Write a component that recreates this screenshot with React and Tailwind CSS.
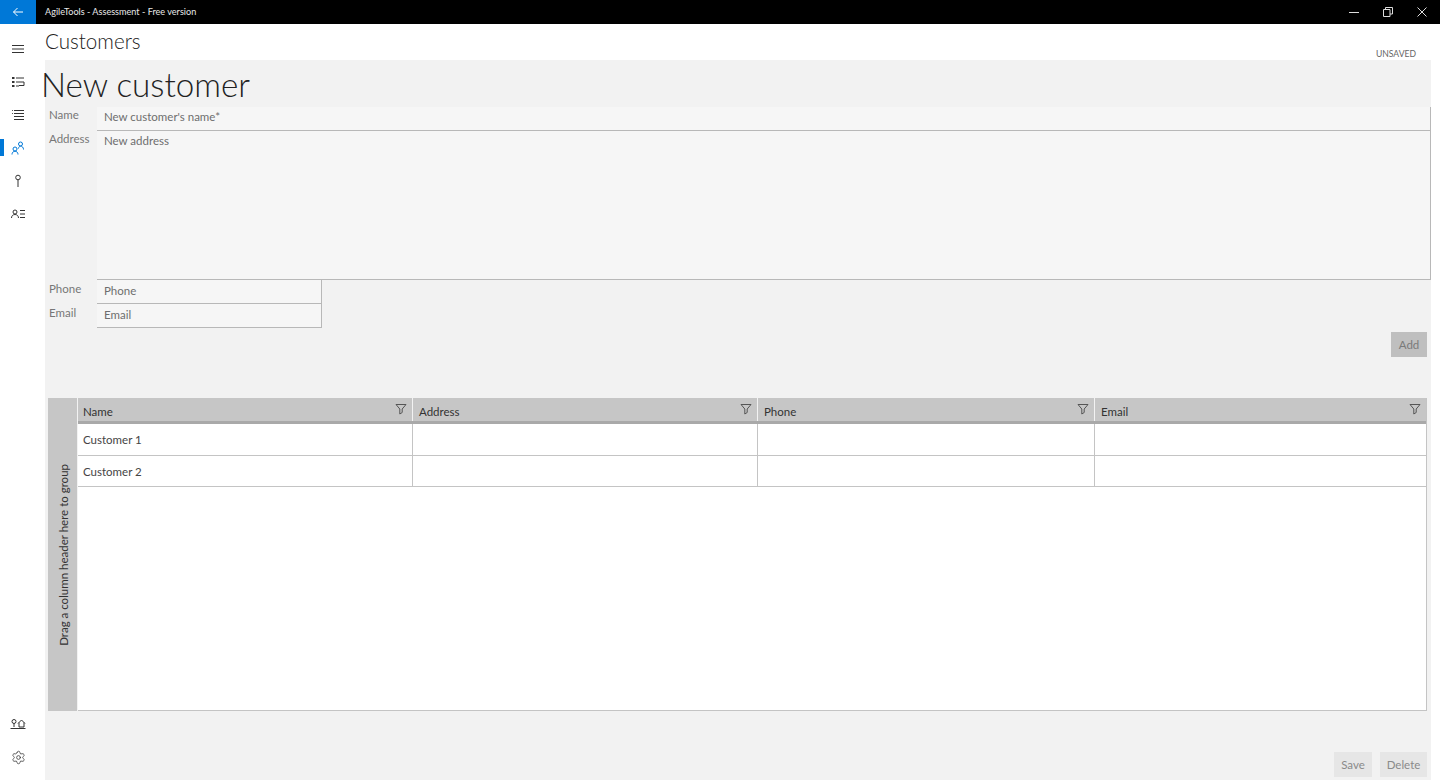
import React from "react";
import { Settings } from "lucide-react";

function Ic({ children, active }) {
  return (
    <svg width="16" height="16" viewBox="0 0 16 16" fill="none" stroke={active ? "#0078d7" : "#333"} strokeWidth="1">
      {children}
    </svg>
  );
}

function NavItem({ children, active }) {
  return (
    <div className="relative flex h-[33px] w-full items-center justify-center">
      {active && <div className="absolute left-0 top-[8px] h-[17px] w-[4px] bg-[#0078d7]" />}
      {children}
    </div>
  );
}

function Filter() {
  return (
    <svg width="12" height="12" viewBox="0 0 12 12" fill="none" stroke="#555" strokeWidth="1" className="absolute right-[5px] top-[5px]">
      <path d="M1 1.500h10L7.200 6v3.500L4.800 11V6z" />
    </svg>
  );
}

function Input({ text, className }) {
  return (
    <div className={`border-b border-r border-[#b8b8b8] bg-[#f6f6f6] pl-[7px] text-[11.500px] text-[#6e6e6e] ${className}`}>{text}</div>
  );
}

const cols = [
  ["Name", "w-[335px]"],
  ["Address", "w-[345px]"],
  ["Phone", "w-[337px]"],
  ["Email", "flex-1"],
];

function Row({ text }) {
  return (
    <div className="flex h-[31.500px] border-b border-[#c4c4c4] bg-white">
      {cols.map(([n, w], i) => (
        <div key={n} className={`${w} flex items-center pl-[5px] pt-[1px] text-[11.500px] text-[#444] ${i < 3 ? "border-r border-[#c4c4c4]" : ""}`}>
          {i === 0 ? text : ""}
        </div>
      ))}
    </div>
  );
}

export default function App() {
  return (
    <div className="flex h-[780px] w-[1440px] flex-col overflow-hidden bg-white font-['Lato','Open_Sans',sans-serif]">
      <header className="flex h-[24px] shrink-0 items-center bg-black text-white">
        <div className="flex h-full w-[36px] items-center justify-center bg-[#0078d7]">
          <svg width="12" height="12" viewBox="0 0 12 12" fill="none" stroke="#fff" strokeWidth="1">
            <path d="M11 6H1.500M5.500 2L1.500 6l4 4" />
          </svg>
        </div>
        <div className="ml-[9px] flex-1 text-[9.100px] text-[#e8e8e8]">AgileTools - Assessment - Free version</div>
        <svg width="10" height="10" viewBox="0 0 10 10" stroke="#ddd" fill="none" className="mr-[24px]"><path d="M0 5.500h10" /></svg>
        <svg width="10" height="10" viewBox="0 0 10 10" stroke="#ddd" fill="none" className="mr-[24px]"><path d="M.5 2.500h6.500v7H.5zM2.500 2.500V.5h7v6.500H7" /></svg>
        <svg width="10" height="10" viewBox="0 0 10 10" stroke="#ddd" fill="none" className="mr-[13px]"><path d="M.5.5l9 9M9.500.5l-9 9" /></svg>
      </header>

      <div className="flex min-h-0 flex-1">
        <nav className="flex w-[36px] shrink-0 flex-col pt-[8px]">
          <NavItem><Ic><path d="M2 4.500h12M2 8h12M2 11.500h12" /></Ic></NavItem>
          <NavItem>
            <Ic>
              <path d="M2 3h2.500v2H2zM2 7h2.500v2H2zM2 11h2.500v2H2z" fill="#333" stroke="none" />
              <path d="M6 4h8M6 8h8v3.500H9M6 12h3" />
            </Ic>
          </NavItem>
          <NavItem><Ic><path d="M4 3.500h10M4 6.500h10M4 9.500h10M4 12.500h10M2 3.500h.8M2 6.500h.8" /></Ic></NavItem>
          <NavItem active>
            <Ic active>
              <circle cx="5" cy="9" r="2" />
              <circle cx="10.500" cy="4" r="2" />
              <path d="M2 14.500c0-1.800 1.200-3.300 3-3.300s3 1.500 3 3.300M8.200 8.700c.5-1.500 1.300-2.600 2.300-2.600 1.700 0 3 1.400 3 3.400" />
            </Ic>
          </NavItem>
          <NavItem><Ic><circle cx="8" cy="4.500" r="2.300" /><path d="M8 6.800V14" /></Ic></NavItem>
          <NavItem>
            <Ic>
              <circle cx="5" cy="6" r="2" />
              <path d="M1.500 12c0-2 1.300-3.500 3.500-3.500s3.500 1.500 3.500 3.500M10 4.500h5M10 8h5M10 11.500h5" />
            </Ic>
          </NavItem>
          <div className="flex-1" />
          <div className="flex h-[33px] w-full items-start justify-center pt-[8px]">
            <Ic>
              <circle cx="4" cy="5.500" r="2" />
              <path d="M4 7.500v3.500M8 7.500l3.500-3.500 3.500 3.500M9 6.500V11h5V6.500M.5 12.500h15" />
            </Ic>
          </div>
          <NavItem><Settings size={15} strokeWidth={1.200} color="#333" /></NavItem>
          <div className="h-[6px]" />
        </nav>

        <main className="ml-[9px] flex w-[1386px] min-w-0 flex-col">
          <div className="relative h-[36px] shrink-0">
            <h1 className="pt-[3px] text-[20.600px] font-light leading-[28px] text-[#222]">Customers</h1>
            <span className="absolute right-[15px] top-[24px] text-[8.600px] leading-[12px] text-[#666]">UNSAVED</span>
          </div>

          <section className="flex min-h-0 flex-1 flex-col bg-[#f2f2f2]">
            <h2 className="-ml-[4px] h-[47px] shrink-0 text-[33.200px] font-light leading-[48px] text-[#222]">New customer</h2>

            <div className="flex h-[24px]">
              <label className="w-[52px] pl-[4px] text-[11.500px] leading-[16px] text-[#777]">Name</label>
              <Input text="New customer's name*" className="flex-1 leading-[20px]" />
            </div>
            <div className="flex h-[149px]">
              <label className="w-[52px] pl-[4px] text-[11.500px] leading-[16px] text-[#777]">Address</label>
              <Input text="New address" className="flex-1 pt-[2px] leading-[16px]" />
            </div>
            <div className="flex h-[24px]">
              <label className="w-[52px] pl-[4px] pt-[1px] text-[11.500px] leading-[16px] text-[#777]">Phone</label>
              <Input text="Phone" className="w-[225px] leading-[22px]" />
            </div>
            <div className="flex h-[24px]">
              <label className="w-[52px] pl-[4px] pt-[1px] text-[11.500px] leading-[16px] text-[#777]">Email</label>
              <Input text="Email" className="w-[225px] leading-[22px]" />
            </div>

            <div className="mr-[4px] mt-[4px] flex justify-end">
              <button className="h-[25px] w-[36px] bg-[#bfbfbf] text-[11.500px] text-[#7a7a7a]">Add</button>
            </div>

            <div className="ml-[3px] mr-[4px] mt-[41px] flex h-[313px] shrink-0">
              <div className="flex w-[29px] items-center justify-center bg-[#c6c6c6]">
                <span className="ml-[2px] rotate-180 whitespace-nowrap text-[11.500px] text-[#333] [writing-mode:vertical-rl]">Drag a column header here to group</span>
              </div>
              <div className="ml-[1px] flex flex-1 flex-col border-b border-r border-[#c4c4c4] bg-white">
                <div className="flex h-[26px] border-b-[3px] border-[#a9a9a9] bg-[#c6c6c6]">
                  {cols.map(([n, w], i) => (
                    <div key={n} className={`${w} relative flex items-center pt-[4px] text-[11.500px] text-[#333] ${i === 0 ? "pl-[5px]" : "pl-[6px]"} ${i < 3 ? "border-r border-[#f2f2f2]" : ""}`}>
                      {n}
                      <Filter />
                    </div>
                  ))}
                </div>
                <Row text="Customer 1" />
                <Row text="Customer 2" />
              </div>
            </div>

            <div className="mr-[4px] mt-[41px] flex justify-end gap-[8px]">
              <button className="h-[25px] w-[38px] bg-[#e6e6e6] text-[11.500px] text-[#8a8a8a]">Save</button>
              <button className="h-[25px] w-[47px] bg-[#e6e6e6] text-[11.500px] text-[#8a8a8a]">Delete</button>
            </div>
          </section>
        </main>
      </div>
    </div>
  );
}
